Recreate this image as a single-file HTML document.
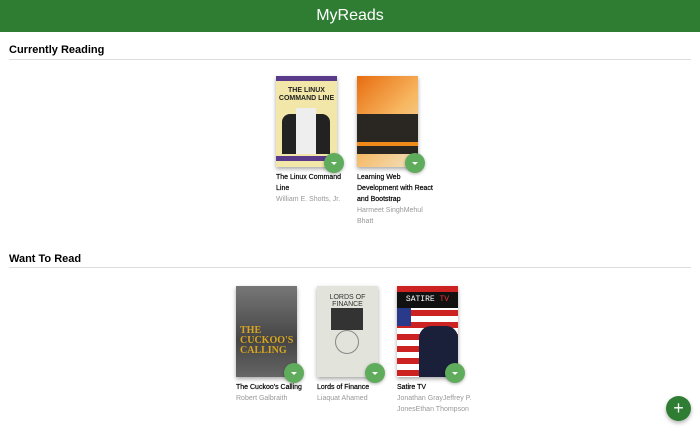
<!DOCTYPE html><html><head><style>
*{margin:0;padding:0;box-sizing:border-box}
body{width:700px;height:430px;background:#fff;font-family:"Liberation Sans",sans-serif;position:relative;overflow:hidden}
.hdr{height:32px;background:#2e7d32;color:#fff;text-align:center;font-size:16px;line-height:32px}
h2{position:absolute;left:9px;font-size:11px;font-weight:bold;color:#000}
.ln{position:absolute;left:9px;right:9px;height:1px;background:#ddd}
.book{position:absolute;width:72px;white-space:nowrap}
.cov{width:61px;height:91px;box-shadow:0 2px 4px rgba(0,0,0,.35);position:relative;overflow:hidden;white-space:normal}
.btn{position:absolute;left:48px;top:77px;width:20px;height:20px;border-radius:50%;background:#60ac5d;box-shadow:0 1px 3px rgba(0,0,0,.3)}
.btn:after{content:"";position:absolute;left:7px;top:9px;border-left:3px solid transparent;border-right:3px solid transparent;border-top:3px solid #fff}
.t{font-size:7px;color:#000;line-height:11px;margin-top:5px;-webkit-text-stroke:0.2px #000}
.a{font-size:7px;color:#999;line-height:11px}
.fab{position:absolute;left:666px;top:396px;width:25px;height:25px;border-radius:50%;background:#2e7d32;color:#fff;text-align:center;line-height:24px;font-size:18px;box-shadow:0 2px 4px rgba(0,0,0,.3)}
</style></head><body>
<div class="hdr">MyReads</div>
<h2 style="top:44px">Currently Reading</h2><div class="ln" style="top:59px"></div>
<div class="book" style="left:276px;top:76px"><div class="cov" style="background:#f2e7a8"><div style="height:5px;background:#5a3a8a"></div><div style="font-size:7px;font-weight:bold;text-align:center;color:#222;margin-top:6px;line-height:8px">THE LINUX<br>COMMAND LINE</div><div style="position:absolute;left:6px;top:38px;width:48px;height:40px;background:#222;border-radius:8px 8px 0 0"></div><div style="position:absolute;left:20px;top:32px;width:20px;height:46px;background:#eee"></div><div style="position:absolute;left:0;right:0;top:80px;height:5px;background:#5a3a8a"></div></div><div class="btn"></div><div class="t">The Linux Command<br>Line</div><div class="a">William E. Shotts, Jr.</div></div>
<div class="book" style="left:357px;top:76px"><div class="cov" style="background:linear-gradient(135deg,#e86c10,#f7b760 50%,#efe2c2)"><div style="position:absolute;left:0;right:0;top:38px;height:40px;background:#2a2622"></div><div style="position:absolute;left:0;right:0;top:66px;height:4px;background:#f08a1a"></div></div><div class="btn"></div><div class="t">Learning Web<br>Development with React<br>and Bootstrap</div><div class="a">Harmeet SinghMehul<br>Bhatt</div></div>
<h2 style="top:253px">Want To Read</h2><div class="ln" style="top:267px"></div>
<div class="book" style="left:236px;top:286px"><div class="cov" style="background:linear-gradient(#777,#444 60%,#666)"><div style="position:absolute;left:4px;top:40px;font-size:10px;font-weight:bold;color:#d9a520;line-height:10px;font-family:'Liberation Serif',serif">THE<br>CUCKOO'S<br>CALLING</div></div><div class="btn"></div><div class="t">The Cuckoo's Calling</div><div class="a">Robert Galbraith</div></div>
<div class="book" style="left:317px;top:286px"><div class="cov" style="background:#e2e3da"><div style="font-size:7px;text-align:center;margin-top:8px;color:#333">LORDS OF FINANCE</div><div style="position:absolute;left:14px;top:22px;width:32px;height:22px;background:#333"></div><div style="position:absolute;left:18px;top:44px;width:24px;height:24px;border-radius:50%;border:1px solid #888"></div></div><div class="btn"></div><div class="t">Lords of Finance</div><div class="a">Liaquat Ahamed</div></div>
<div class="book" style="left:397px;top:286px"><div class="cov" style="background:repeating-linear-gradient(#c22 0 6px,#fff 6px 12px)"><div style="position:absolute;left:0;right:0;top:6px;height:16px;background:#111;color:#fff;font-size:8px;text-align:center;line-height:16px;font-family:'Liberation Mono',monospace;white-space:nowrap">SATIRE <span style="color:#e33">TV</span></div><div style="position:absolute;left:0;top:22px;width:14px;height:18px;background:#2a3a8a"></div><div style="position:absolute;left:22px;top:40px;width:39px;height:51px;background:#1a1f3a;border-radius:12px 12px 0 0"></div></div><div class="btn"></div><div class="t">Satire TV</div><div class="a">Jonathan GrayJeffrey P.<br>JonesEthan Thompson</div></div>
<div class="fab">+</div>
</body></html>
